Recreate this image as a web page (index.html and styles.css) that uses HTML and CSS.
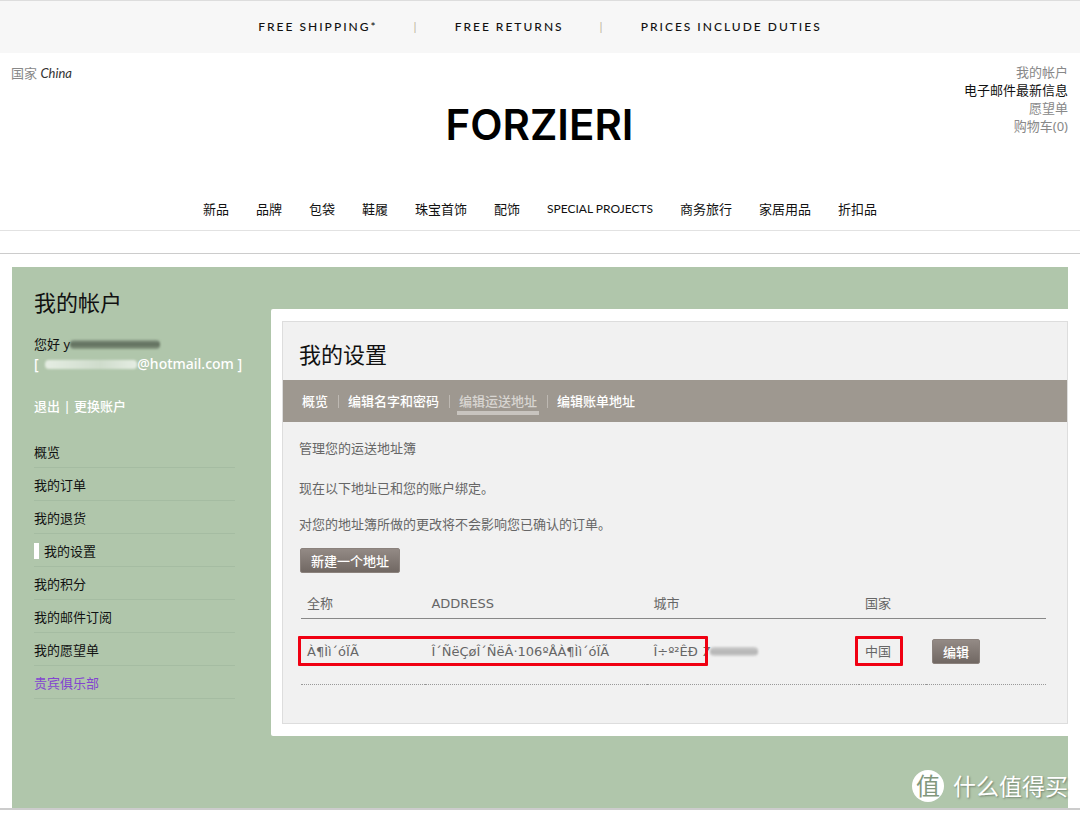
FILE: index.html
```html
<!DOCTYPE html>
<html lang="zh-CN">
<head>
<meta charset="utf-8">
<title>FORZIERI - 我的设置</title>
<meta name="viewport" content="width=device-width, initial-scale=1">
<link rel="stylesheet" href="styles.css">
</head>
<body>
<div class="promo">
  <span>FREE SHIPPING*</span>
  <span class="promo-sep">|</span>
  <span>FREE RETURNS</span>
  <span class="promo-sep">|</span>
  <span>PRICES INCLUDE DUTIES</span>
</div>

<header class="header">
  <div class="header-top">
    <div class="country">国家 <a href="#" class="country-name">China</a></div>
    <a href="#" class="logo">FORZIERI</a>
    <ul class="user-links">
      <li><a href="#">我的帐户</a></li>
      <li><a href="#" class="strong">电子邮件最新信息</a></li>
      <li><a href="#">愿望单</a></li>
      <li><a href="#">购物车(0)</a></li>
    </ul>
  </div>
  <nav class="main-nav">
    <a href="#">新品</a>
    <a href="#">品牌</a>
    <a href="#">包袋</a>
    <a href="#">鞋履</a>
    <a href="#">珠宝首饰</a>
    <a href="#">配饰</a>
    <a href="#" class="latin">SPECIAL PROJECTS</a>
    <a href="#">商务旅行</a>
    <a href="#">家居用品</a>
    <a href="#">折扣品</a>
  </nav>
</header>

<div class="page">
  <div class="account">
    <aside class="sidebar">
      <h1 class="title">我的帐户</h1>
      <p class="greeting">您好 y<span class="smear smear-dark"></span></p>
      <p class="email">[ <span class="smear smear-light"></span>@hotmail.com ]</p>
      <p class="session"><a href="#">退出</a> | <a href="#">更换账户</a></p>
      <ul class="side-menu">
        <li><a href="#">概览</a></li>
        <li><a href="#">我的订单</a></li>
        <li><a href="#">我的退货</a></li>
        <li><a href="#" class="current">我的设置</a></li>
        <li><a href="#">我的积分</a></li>
        <li><a href="#">我的邮件订阅</a></li>
        <li><a href="#">我的愿望单</a></li>
        <li><a href="#" class="vip">贵宾俱乐部</a></li>
      </ul>
    </aside>

    <main class="panel-frame">
      <section class="panel">
        <h2 class="title panel-title">我的设置</h2>
        <nav class="tabs">
          <a href="#">概览</a>
          <a href="#">编辑名字和密码</a>
          <a href="#" class="active"><span>编辑运送地址</span></a>
          <a href="#">编辑账单地址</a>
        </nav>
        <div class="panel-body">
          <p class="intro">管理您的运送地址簿</p>
          <p>现在以下地址已和您的账户绑定。</p>
          <p>对您的地址簿所做的更改将不会影响您已确认的订单。</p>
          <button type="button" class="btn">新建一个地址</button>
          <table class="addresses">
            <colgroup>
              <col class="col-name"><col class="col-address"><col class="col-city"><col class="col-country"><col>
            </colgroup>
            <thead>
              <tr><th>全称</th><th>ADDRESS</th><th>城市</th><th>国家</th><th></th></tr>
            </thead>
            <tbody>
              <tr>
                <td>À¶Ìì´óÏÃ<span class="mark mark-row"></span></td>
                <td>Î´ÑëÇøÎ´ÑëÂ·106ºÅÀ¶Ìì´óÏÃ</td>
                <td>Î÷º²ÊÐ <span class="postcode">7</span><span class="smear smear-grey"></span></td>
                <td class="country-cell">中国<span class="mark mark-cell"></span></td>
                <td><button type="button" class="btn">编辑</button></td>
              </tr>
            </tbody>
          </table>
        </div>
      </section>
    </main>
    <div class="watermark"><span class="watermark-badge">值</span>什么值得买</div>
  </div>
</div>
</body>
</html>
```
FILE: styles.css
```css
* { box-sizing: border-box; }

body {
  margin: 0;
  background: #fff;
  color: #222;
  font: 13px/20px "Noto Sans", "Noto Sans CJK SC", sans-serif;
}

h1, h2, p, ul { margin: 0; padding: 0; font-weight: 400; }
ul { list-style: none; }
a { color: inherit; text-decoration: none; }

.promo {
  display: flex;
  justify-content: center;
  gap: 36px;
  height: 53px;
  border-top: 1px solid #ddd;
  background: #f7f7f7;
  font: 500 12px/52px Lato, sans-serif;
  letter-spacing: 2px;
  color: #111;
}
.promo-sep { color: #c3b9a4; }

.header { border-bottom: 1px solid #e2e2e2; }
.header-top {
  display: grid;
  grid-template-columns: 1fr auto 1fr;
  height: 136px;
  padding: 10px 12px 0 11px;
}
.country { color: #888; }
.country-name { color: #333; font-style: italic; font-family: Lato, sans-serif; }
.logo {
  align-self: start;
  padding-top: 37px;
  color: #000;
  font: 600 42px/50px Inter, sans-serif;
}
.user-links { color: #888; text-align: right; line-height: 18px; }
.user-links .strong { color: #111; }

.main-nav {
  display: flex;
  justify-content: center;
  gap: 27px;
  padding: 10px 0 11px;
  color: #111;
}
.main-nav .latin { font-family: Lato, sans-serif; font-size: 12px; }

.page {
  margin-top: 22px;
  padding: 13px 12px 0;
  border-top: 1px solid #ccc;
  border-bottom: 2px solid #ccc;
}
.account {
  position: relative;
  display: flex;
  align-items: flex-start;
  padding: 42px 0 72px;
  background: #b0c6ab;
}

.sidebar { flex: 0 0 259px; min-width: 0; margin-top: -23px; padding: 0 36px 0 22px; color: #111; }
.title { font-size: 22px; line-height: 32px; color: #111; }
.greeting { margin-top: 16px; }
.email, .session { color: #fff; font-weight: 500; white-space: nowrap; }
.email { font-size: 14px; }
.session { margin-top: 22px; }
.side-menu { margin-top: 19px; }
.side-menu li { height: 33px; padding-top: 7px; border-bottom: 1px solid #a5bca2; }
.side-menu a { display: block; }
.side-menu .current {
  padding-left: 5px;
  border-left: 5px solid #fff;
  height: 16px;
  margin-top: 2px;
  line-height: 16px;
}
.side-menu .vip { color: #8345d0; }

.smear { display: inline-block; height: 9px; border-radius: 4px; filter: blur(1px); }
.smear-dark { width: 90px; background: linear-gradient(#8a9b87, #5e6c5b 45%, #84957f); }
.smear-light { width: 92px; margin-left: 3px; background: linear-gradient(90deg, #e5ede3, #cfdccc 60%, #e5ede3); }
.smear-grey { width: 48px; background: linear-gradient(#ccc, #b3b3b3 60%, #d2d2d2); }

.panel-frame { flex: 1; min-width: 0; padding: 12px 0 12px 11px; background: #fff; border-radius: 2px 0 0 2px; }
.panel { border: 1px solid #ddd; background: #f1f1f1; color: #666; }
.panel-title { padding: 16px 16px 10px; }
.tabs {
  display: flex;
  align-items: center;
  height: 42px;
  padding: 0 19px;
  background: #9e9890;
  color: #fff;
  font-weight: 500;
}
.tabs a { display: flex; align-items: center; }
.tabs a + a::before { content: ""; height: 13px; margin: 0 9px 0 10px; border-left: 1px solid #bdb8b2; }
.tabs .active { color: #d8d5d1; }
.tabs .active span { margin: 0 -2px; padding: 4px 2px 0; border-bottom: 4px solid #c8c4bf; }

.panel-body { padding: 16px 21px 38px 16px; }
.panel-body p { margin-bottom: 16px; }
.panel-body .intro { margin-bottom: 20px; }
.btn {
  display: block;
  height: 25px;
  padding: 0 10px;
  border: 1px solid #8b827d;
  border-radius: 2px;
  background: linear-gradient(#938a85, #716863);
  color: #fff;
  font: 500 13px/20px "Noto Sans", "Noto Sans CJK SC", sans-serif;
}
.panel-body > .btn { margin: -2px 0 0 1px; }

.addresses {
  width: calc(100% - 2px);
  margin: 12px 0 0 2px;
  border-collapse: separate;
  border-spacing: 0;
  table-layout: fixed;
  font-family: "DejaVu Sans", "Noto Sans CJK SC", sans-serif;
}
.col-name { width: 16.7%; }
.col-address { width: 29.8%; }
.col-city { width: 28.4%; }
.col-country { width: 9%; }
.addresses th, .addresses td { padding: 0 6px; text-align: left; font-weight: 400; white-space: nowrap; }
.addresses th { height: 34px; padding-top: 4px; border-bottom: 1px solid #888; }
.addresses tbody tr { position: relative; }
.addresses td { height: 66px; border-bottom: 1px dotted #999; }
.postcode { font-style: italic; }
.country-cell { position: relative; }

/* highlight boxes laid over the address data */
.mark { position: absolute; height: 30px; top: 17px; border: 3px solid #f00012; border-radius: 1px; }
.mark-row { left: -3px; width: 55%; }
.mark-cell { left: -4px; width: 48px; }

.watermark {
  position: absolute;
  right: 0;
  bottom: 4px;
  display: flex;
  align-items: center;
  gap: 9px;
  color: #fff;
  font-size: 23px;
  line-height: 36px;
  text-shadow: 1px 1px 2px #71836e;
}
.watermark-badge {
  width: 32px;
  height: 32px;
  border-radius: 50%;
  background: #fff;
  color: #82977d;
  font-size: 24px;
  line-height: 31px;
  text-align: center;
  text-shadow: none;
}
```
